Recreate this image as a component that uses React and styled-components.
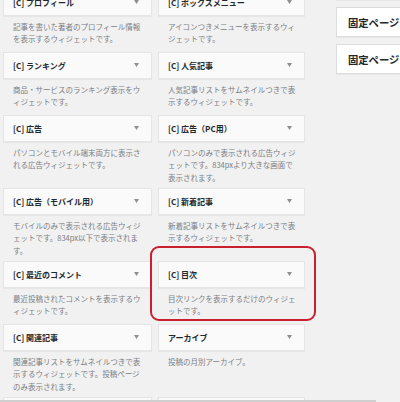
import React from "react";
import styled, { createGlobalStyle, css } from "styled-components";

const GlobalStyle = createGlobalStyle`
  html, body {
    margin: 0;
    padding: 0;
    background: #f1f1f1;
    overflow: hidden;
  }
  body {
    font-family: "Noto Sans CJK JP", "Noto Sans", sans-serif;
    color: #23282d;
  }
`;

const Page = styled.div`
  height: 402px;
  display: flex;
  flex-direction: column;
  overflow: hidden;
`;

const Workspace = styled.div`
  height: 400px;
  display: flex;
  align-items: flex-start;
  overflow: hidden;
`;

const WidgetGrid = styled.div`
  flex-shrink: 0;
  display: grid;
  grid-template-columns: 149px 147px;
  column-gap: 6px;
  padding-left: 3px;
  margin-top: -11.5px;
`;

const Widget = styled.div`
  position: relative;
  display: flex;
  flex-direction: column;

  ${(p) =>
    p.$highlighted &&
    css`
      &::after {
        content: "";
        position: absolute;
        top: -15px;
        left: -8px;
        right: -11px;
        bottom: 3px;
        border: 2px solid #c91f2e;
        border-radius: 9px;
        pointer-events: none;
      }
    `}
`;

const WidgetTop = styled.div`
  box-sizing: border-box;
  height: 27px;
  display: flex;
  align-items: center;
  justify-content: space-between;
  padding: 0 12px 0 9px;
  background: #fafafa;
  border: 1px solid #e5e5e5;
  box-shadow: 0 1px 1px rgba(0, 0, 0, 0.04);
`;

const WidgetTitle = styled.span`
  font-size: 8px;
  font-weight: 700;
  color: #23282d;
  white-space: nowrap;
`;

const Caret = styled.svg`
  width: 5px;
  height: 4px;
  fill: #8c8f94;
  flex-shrink: 0;
`;

const WidgetDescription = styled.div`
  box-sizing: border-box;
  min-height: 36px;
  padding: 5px 8px 3.5px 10px;
  font-size: 7.5px;
  line-height: 12.5px;
  color: #7a7e84;
`;

const Sidebar = styled.div`
  flex-shrink: 0;
  width: 140px;
  margin-left: 31px;
  margin-top: -30px;
  display: flex;
  flex-direction: column;
  gap: 7px;
`;

const SidebarBox = styled.div`
  box-sizing: border-box;
  height: 30px;
  display: flex;
  align-items: center;
  padding-left: 11px;
  background: #fff;
  border: 1px solid #dcdcde;
  box-shadow: 0 1px 1px rgba(0, 0, 0, 0.04);
  font-size: 10.3px;
  font-weight: 600;
  color: #23282d;
  white-space: nowrap;
`;

const BottomRule = styled.div`
  height: 2px;
  width: 376px;
  background: #cfcfcf;
`;

const widgets = [
  { title: "[C] プロフィール", desc: "記事を書いた著者のプロフィール情報を表示するウィジェットです。" },
  { title: "[C] ボックスメニュー", desc: "アイコンつきメニューを表示するウィジェットです。" },
  { title: "[C] ランキング", desc: "商品・サービスのランキング表示をウィジェットです。" },
  { title: "[C] 人気記事", desc: "人気記事リストをサムネイルつきで表示するウィジェットです。" },
  { title: "[C] 広告", desc: "パソコンとモバイル端末両方に表示される広告ウィジェットです。" },
  { title: "[C] 広告（PC用）", desc: "パソコンのみで表示される広告ウィジェットです。834pxより大きな画面で表示されます。" },
  { title: "[C] 広告（モバイル用）", desc: "モバイルのみで表示される広告ウィジェットです。834px以下で表示されます。" },
  { title: "[C] 新着記事", desc: "新着記事リストをサムネイルつきで表示するウィジェットです。" },
  { title: "[C] 最近のコメント", desc: "最近投稿されたコメントを表示するウィジェットです。" },
  { title: "[C] 目次", desc: "目次リンクを表示するだけのウィジェットです。", highlighted: true },
  { title: "[C] 関連記事", desc: "関連記事リストをサムネイルつきで表示するウィジェットです。投稿ページのみ表示されます。" },
  { title: "アーカイブ", desc: "投稿の月別アーカイブ。" },
  { title: "カテゴリー", desc: "カテゴリーのリストやドロップダウン。" },
  { title: "カレンダー", desc: "サイトの投稿のカレンダー。" },
];

const sidebarAreas = ["固定ページ", "固定ページ", "固定ページ"];

function CaretDown() {
  return (
    <Caret viewBox="0 0 10 8" aria-hidden="true">
      <path d="M0 0 H10 L5 8 Z" />
    </Caret>
  );
}

export default function App() {
  return (
    <>
      <GlobalStyle />
      <Page>
        <Workspace>
          <WidgetGrid>
            {widgets.map((w, i) => (
              <Widget key={i} $highlighted={w.highlighted}>
                <WidgetTop>
                  <WidgetTitle>{w.title}</WidgetTitle>
                  <CaretDown />
                </WidgetTop>
                <WidgetDescription>{w.desc}</WidgetDescription>
              </Widget>
            ))}
          </WidgetGrid>
          <Sidebar>
            {sidebarAreas.map((name, i) => (
              <SidebarBox key={i}>{name}</SidebarBox>
            ))}
          </Sidebar>
        </Workspace>
        <BottomRule />
      </Page>
    </>
  );
}
